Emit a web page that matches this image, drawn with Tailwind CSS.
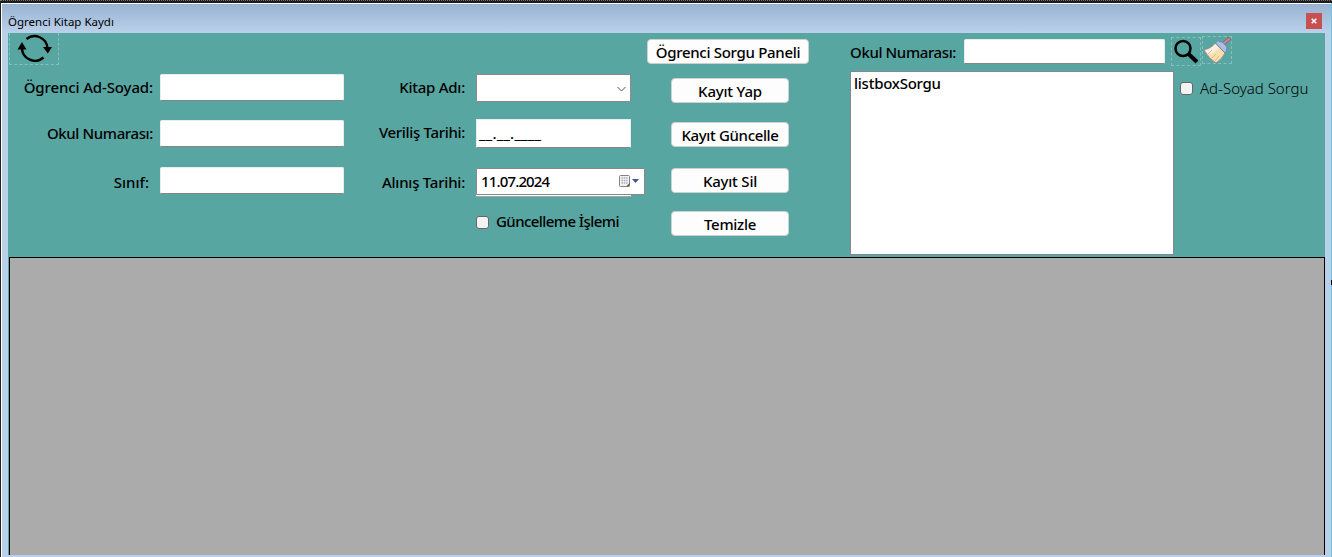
<!DOCTYPE html>
<html lang="tr">
<head>
<meta charset="utf-8">
<title>Ögrenci Kitap Kaydı</title>
<script src="https://cdn.jsdelivr.net/npm/@tailwindcss/browser@4"></script>
</head>
<body class="w-[1332px] h-[557px] overflow-hidden bg-[#222] font-['Noto_Sans',sans-serif] text-black">
<div class="flex flex-col h-[557px]">
  <div class="h-[3px] shrink-0 bg-[#1c1c1c] border-t border-dotted border-[#777]"></div>
  <div class="flex flex-1 min-h-0 pl-px">
    <div class="flex flex-col flex-1 border-l border-t border-white bg-[#bacfe9] pr-[6px]">
      <header class="flex h-[29px] shrink-0 -mr-[6px] pl-[6px] pr-[9px] justify-between bg-linear-to-b from-[#98b3d2] to-[#bbd1ea]">
        <h1 class="mt-[9px] text-[11.5px] leading-[18px] whitespace-nowrap">Ögrenci Kitap Kaydı</h1>
        <button class="mt-[9px] w-4 h-4 bg-[#c75050] flex items-center justify-center" aria-label="Kapat">
          <svg width="6" height="6" viewBox="0 0 6 6" stroke="#fff" stroke-width="1.5"><path d="M.7.7l4.6 4.6M5.3.7L.7 5.3"/></svg>
        </button>
      </header>
      <main class="flex flex-col flex-1 min-h-0 ml-[6px] mb-[2px] bg-[#58a6a1]">
        <section class="flex h-[224px] shrink-0 text-[15px] leading-[18px] font-medium whitespace-nowrap">
          <div class="w-[336px] shrink-0">
            <button class="block ml-px w-[50px] h-8 border border-t-0 border-dashed border-[#86bfbc]">
              <svg class="ml-[7px] -mt-[2px]" width="36" height="30" viewBox="0 0 36 30" fill="none" stroke="#000" stroke-width="2.4"><path d="M9.500 6A13 13 0 0 1 30.500 15M26.500 24.500A13 13 0 0 1 5 14"/><path d="M26 14h9l-4.200 6.500zM.5 16.500L5 9l4.500 7.500z" fill="#000" stroke="none"/></svg>
            </button>
            <div class="flex mt-[9px] h-[27px]">
              <label class="w-[145px] mr-[7px] mt-1 text-right tracking-[-0.12px]">Ögrenci Ad-Soyad:</label>
              <div class="w-[184px] bg-white rounded-[2px] border border-[#e8eeee] border-b-[#858585]"></div>
            </div>
            <div class="flex mt-[19px] h-[27px]">
              <label class="w-[145px] mr-[7px] mt-1 text-right tracking-[-0.38px]">Okul Numarası:</label>
              <div class="w-[184px] bg-white rounded-[2px] border border-[#e8eeee] border-b-[#858585]"></div>
            </div>
            <div class="flex mt-[20px] h-[27px]">
              <label class="w-[141px] mr-[11px] mt-[6px] text-right">Sınıf:</label>
              <div class="w-[184px] bg-white rounded-[2px] border border-[#e8eeee] border-b-[#858585]"></div>
            </div>
          </div>
          <div class="w-[301px] shrink-0 pt-[41px]">
            <div class="flex h-7">
              <label class="w-[121px] mr-[11px] mt-1 text-right tracking-[-0.25px]">Kitap Adı:</label>
              <div class="w-[155px] flex items-center justify-end pr-1 bg-white rounded-[1px] border border-[#8b878b]">
                <svg class="mt-px" width="9" height="6" viewBox="0 0 9 6" fill="none" stroke="#555"><path d="M.5 1l4 4 4-4"/></svg>
              </div>
            </div>
            <div class="flex mt-[17px] h-[29px]">
              <label class="w-[121px] mr-[11px] mt-1 text-right tracking-[-0.33px]">Veriliş Tarihi:</label>
              <div class="w-[155px] pl-[2px] pt-[4px] bg-white rounded-[1px] border border-[#e8eeee] border-b-[#858585]"><span class="tracking-[0.2px]">__.__.____</span></div>
            </div>
            <div class="flex mt-[20px] h-[29px]">
              <label class="w-[121px] mr-[11px] mt-[5px] text-right tracking-[-0.23px]">Alınış Tarihi:</label>
              <div class="w-[169px]">
                <div class="flex h-[27px] items-center bg-white rounded-[1px] border border-[#8b878b] pl-1 pr-[4px]">
                  <span class="flex-1 pb-[2px] tracking-[-0.85px]">11.07.2024</span>
                  <svg width="21" height="13" viewBox="0 0 21 13"><rect x=".5" y=".5" width="10" height="11" rx="1" fill="#f2f2f5" stroke="#8a8084"/><path d="M2.500 3h6M2.500 5.500h6M2.500 8h6" stroke="#a5aeba" stroke-width="1.500" stroke-dasharray="1.500 .75"/><path d="M7 11.500l3.500-3.500v3.500z" fill="#666"/><path d="M13 4h7l-3.500 4z" fill="#41588c"/></svg>
                </div>
                <div class="w-[155px] h-[2px] bg-white border-b border-[#a5a5a5]"></div>
              </div>
            </div>
            <div class="flex ml-[132px] mt-[15px] items-center h-[20px]">
              <div class="w-[13px] h-[13px] rounded-[3px] bg-[#f3f3f3] border border-[#666]"></div>
              <span class="ml-[7px] pb-[2px] tracking-[-0.57px]">Güncelleme İşlemi</span>
            </div>
          </div>
          <div class="w-[205px] shrink-0 pt-[6px] pl-[2px]">
            <button class="block w-[162px] h-[25px] pt-px rounded-[4px] border border-[#d0d0d0] bg-[#fdfdfd] tracking-[-0.3px]">Ögrenci Sorgu Paneli</button>
            <div class="flex flex-col ml-6 w-[118px] mt-[14px]">
              <button class="h-[25px] pt-px rounded-[4px] border border-[#d0d0d0] bg-[#fdfdfd] tracking-[-0.2px]">Kayıt Yap</button>
              <button class="h-[25px] pt-px mt-[19px] rounded-[4px] border border-[#d0d0d0] bg-[#fdfdfd] tracking-[-0.35px]">Kayıt Güncelle</button>
              <button class="h-[25px] pt-px mt-[21px] rounded-[4px] border border-[#d0d0d0] bg-[#fdfdfd] tracking-[-0.2px]">Kayıt Sil</button>
              <button class="h-[25px] pt-px mt-[18px] rounded-[4px] border border-[#d0d0d0] bg-[#fdfdfd] tracking-[-0.3px]">Temizle</button>
            </div>
          </div>
          <div class="flex flex-col pt-[3px]">
            <div class="flex h-[35px]">
              <label class="w-[106px] mr-[8px] mt-[7px] tracking-[-0.38px]">Okul Numarası:</label>
              <div class="w-[201px] h-[25px] mt-[3px] bg-white rounded-[2px] border border-[#e8eeee] border-b-[#858585]"></div>
              <button class="ml-[6px] mt-[1px] w-[30px] h-[29px] border border-dashed border-[#86bfbc]">
                <svg width="28" height="27" viewBox="0 0 28 27" fill="none" stroke="#000"><circle cx="11" cy="10.500" r="7.500" stroke-width="2.500"/><path d="M16.300 15.800L25 24" stroke-width="4"/></svg>
              </button>
              <button class="ml-[1px] w-[30px] h-[28px] border border-dashed border-[#86bfbc]">
                <svg class="-mt-px" width="28" height="26" viewBox="0 0 28 26" stroke-linejoin="round"><path d="M20 7l6-5" stroke="#8e6a7e" stroke-width="3.800" stroke-linecap="round"/><path d="M20 7l6-5" stroke="#c58990" stroke-width="2" stroke-linecap="round"/><path d="M1 13Q8 12 12.500 6L22 16Q19 22 13 26Q6 22 1 13z" fill="#f8dfac" stroke="#a28b91"/><path d="M2 13Q8 12 12 7l4 4Q10 17 5 18z" fill="#fbeee0"/><path d="M5 17l4-4M9 21l4-4M12 24l4-5" stroke="#dfb98c"/><path d="M12.500 6l2.500-2.500 2 1.500 2.500 0 4.500 5-.5 3.500-1.500 2.500z" fill="#a9bfe3" stroke="#7783b0"/></svg>
              </button>
            </div>
            <div class="flex">
              <div class="w-[324px] h-[184px] bg-white border border-[#828790] pl-[3px] pt-[2px] tracking-[-0.25px]">listboxSorgu</div>
              <div class="flex items-center ml-[6px] mt-[7px] h-[21px]">
                <div class="w-[13px] h-[13px] rounded-[3px] bg-[#f3f3f3] border border-[#666]"></div>
                <span class="ml-[7px] pb-px font-light">Ad-Soyad Sorgu</span>
              </div>
            </div>
          </div>
        </section>
        <section class="flex-1 ml-px border border-b-0 border-black bg-[#ababab]"></section>
      </main>
    </div>
    <div class="w-px bg-[#63c9e4] pt-[277px]"><div class="h-[5px] bg-black"></div></div>
  </div>
</div>
</body>
</html>
